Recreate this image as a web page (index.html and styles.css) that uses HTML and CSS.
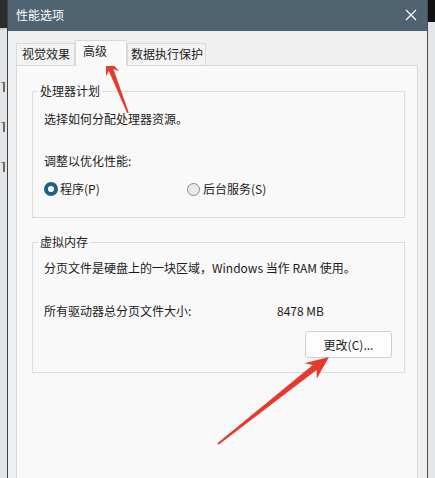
FILE: index.html
```html
<!DOCTYPE html>
<html lang="zh-CN">
<head>
    <meta charset="UTF-8">
    <meta name="viewport" content="width=device-width, initial-scale=1.0">
    <title>性能选项</title>
    <link rel="stylesheet" href="styles.css">
</head>
<body>
    <div class="screen">
        <div class="side side-left">
            <div class="side-top"></div>
            <div class="side-rest">
                <span class="stub stub1"></span>
                <span class="stub stub2"></span>
                <span class="stub stub3"></span>
            </div>
        </div>

        <div class="dialog">
            <div class="titlebar">
                <span class="title">性能选项</span>
                <svg class="close" width="12" height="12" viewBox="0 0 12 12">
                    <path d="M1 1 L11 11 M11 1 L1 11" stroke="#fff" stroke-width="1.2" fill="none"/>
                </svg>
            </div>

            <div class="dialog-body">
                <div class="tabs">
                    <div class="tab tab-visual">视觉效果</div>
                    <div class="tab tab-adv active">高级</div>
                    <div class="tab tab-dep">数据执行保护</div>
                </div>

                <div class="panel">
                    <fieldset class="group group-cpu">
                        <legend>处理器计划</legend>
                        <p class="line">选择如何分配处理器资源。</p>
                        <p class="line sub">调整以优化性能:</p>
                        <div class="radios">
                            <label class="radio-item"><span class="radio checked"></span>程序(P)</label>
                            <label class="radio-item"><span class="radio"></span>后台服务(S)</label>
                        </div>
                    </fieldset>

                    <fieldset class="group group-mem">
                        <legend>虚拟内存</legend>
                        <p class="line">分页文件是硬盘上的一块区域，Windows 当作 RAM 使用。</p>
                        <div class="size-row">
                            <span class="size-label">所有驱动器总分页文件大小:</span>
                            <span class="size-value">8478 MB</span>
                        </div>
                        <div class="btn-row">
                            <button type="button" class="btn">更改(C)...</button>
                        </div>
                    </fieldset>
                </div>
            </div>
        </div>

        <div class="side side-right">
            <div class="side-top"></div>
            <div class="side-rest"></div>
        </div>

        <!-- red pointer arrows drawn over the dialog -->
        <svg class="marks" width="435" height="478" viewBox="0 0 435 478">
            <polygon fill="#e8392f" points="106,57 119.1,71.1 113.4,69.1 128.8,112.7 127.2,113.3 108.8,70.9 106.1,76.3"/>
            <polygon fill="#e8392f" points="329,357 316.8,378.4 316.6,369.9 218.6,444.7 217.4,443.3 312.8,365.1 304.4,363.2"/>
        </svg>
    </div>
</body>
</html>
```

FILE: styles.css
```css
* {
    box-sizing: border-box;
}

body {
    margin: 0;
    padding: 0;
    font-family: "Noto Sans CJK SC", "Noto Sans", sans-serif;
    font-size: 12px;
    line-height: 16px;
    color: #1b1b1b;
    background: #dfe3e6;
}

.screen {
    position: relative;
    display: flex;
    width: 435px;
    height: 478px;
    overflow: hidden;
}

/* windows peeking out behind the dialog */
.side {
    width: 8px;
    display: flex;
    flex-direction: column;
}
.side-left {
    border-right: 1px solid #3f4346;
}
.side-left .side-top {
    height: 28px;
    background: #2a2d30;
}
.side-right {
    border-left: 1px solid #4a4e52;
}
.side-right .side-top {
    height: 22px;
    background: #111;
}
.side-rest {
    flex: 1;
    background: #e3e6e9;
    overflow: hidden;
    display: flex;
    flex-direction: column;
}
.side-left .side-rest {
    border-top: 2px solid #c9d3dc;
}
/* glyph edges of the window behind */
.stub {
    width: 4px;
    height: 10px;
    margin-left: 1px;
    border-right: 2px solid #6a6a6a;
    border-top: 1px solid #7a7a7a;
}
.stub1 { margin-top: 52px; }
.stub2 { margin-top: 30px; }
.stub3 { margin-top: 30px; }

.dialog {
    width: 419px;
    display: flex;
    flex-direction: column;
    background: #f0f0f0;
}

.titlebar {
    height: 31px;
    background: #4f6470;
    display: flex;
    align-items: center;
    justify-content: space-between;
    padding: 0 10px 1px 8px;
    color: #fff;
}
.title {
    font-size: 12px;
}
.close {
    display: block;
}

.dialog-body {
    flex: 1;
    display: flex;
    flex-direction: column;
    padding-left: 8px;
}

.tabs {
    display: flex;
    align-items: flex-end;
    padding-top: 9px;
}
.tab {
    height: 22px;
    padding-top: 2px;
    border: 1px solid #d9d9d9;
    border-bottom: none;
    background: #f3f3f3;
    white-space: nowrap;
}
.tab-visual {
    width: 59px;
    padding-left: 5px;
}
.tab-adv {
    width: 52px;
    padding-left: 7px;
}
.tab-dep {
    width: 79px;
    padding-left: 3px;
}
.tab.active {
    position: relative;
    z-index: 1;
    height: 26px;
    margin-bottom: -1px;
    padding-top: 2px;
    background: #f9f9f9;
}

.panel {
    flex: 1;
    width: 402px;
    border: 1px solid #d9d9d9;
    border-bottom: none;
    background: #f9f9f9;
    padding: 17px 12px 0 15px;
}

.group {
    margin: 0;
    min-width: 0;
    border: 1px solid #dcdcdc;
    padding: 0 12px 0 11px;
}
.group legend {
    padding: 0 2px;
    margin-left: -6px;
    line-height: 16px;
}
.group-cpu {
    padding-top: 12px;
    padding-bottom: 20px;
}
.group-mem {
    margin-top: 16px;
    padding-top: 10px;
    padding-bottom: 14px;
}

.line {
    margin: 0;
}
.line.sub {
    margin-top: 26px;
}

.radios {
    display: flex;
    margin-top: 12px;
}
.radio-item {
    display: flex;
    align-items: center;
    width: 143px;
}
.radio {
    width: 13px;
    height: 13px;
    border-radius: 50%;
    border: 1px solid #8a8a8a;
    background: #e9e9e9;
    margin-right: 3px;
}
.radio.checked {
    width: 14px;
    height: 14px;
    border: 4px solid #1f5f8b;
    background: #fff;
    margin-right: 2px;
}

.size-row {
    display: flex;
    margin-top: 27px;
}
.size-label {
    width: 233px;
}

.btn-row {
    display: flex;
    justify-content: flex-end;
    margin-top: 12px;
}
.btn {
    width: 87px;
    height: 27px;
    border: 1px solid #d0d0d0;
    border-radius: 3px;
    background: #fdfdfd;
    font-family: inherit;
    font-size: 12px;
    color: #1b1b1b;
    padding: 0;
}

.marks {
    position: absolute;
    top: 0;
    left: 0;
    pointer-events: none;
}
```
